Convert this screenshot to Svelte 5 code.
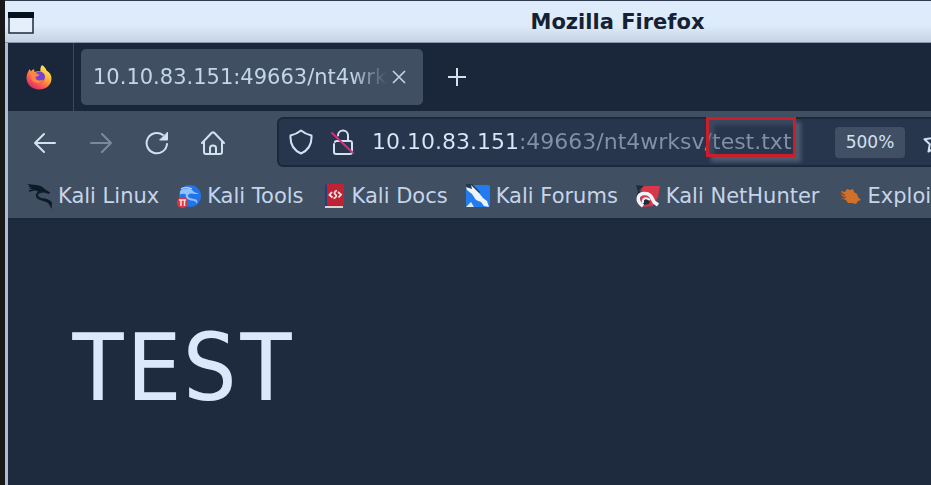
<script>
  const bookmarks = [
    { name: 'Kali Linux', icon: 'linux' },
    { name: 'Kali Tools', icon: 'tools' },
    { name: 'Kali Docs', icon: 'docs' },
    { name: 'Kali Forums', icon: 'forums' },
    { name: 'Kali NetHunter', icon: 'nethunter' },
    { name: 'Exploit', icon: 'exploit' }
  ];
  let url = $state('10.10.83.151:49663/nt4wrksv/test.txt');
</script>

<div class="desktop">
  <div class="window">
    <header class="titlebar">
      <svg class="winicon" viewBox="0 0 26 22" width="26" height="22" aria-hidden="true">
        <rect x="1" y="1" width="24" height="20" fill="#e4effb" stroke="#1c2a3a" stroke-width="1.5" />
        <rect x="0" y="0" width="26" height="6" fill="#04101e" />
      </svg>
      <h1>Mozilla Firefox</h1>
    </header>

    <div class="tabs">
      <button class="view" aria-label="Firefox View">
        <svg viewBox="0 0 26 26" width="26" height="26">
          <defs>
            <linearGradient id="flame" x1="0.85" y1="0.1" x2="0.25" y2="0.95">
              <stop offset="0" stop-color="#fff04f" />
              <stop offset="0.35" stop-color="#ffb43c" />
              <stop offset="0.65" stop-color="#ff6a48" />
              <stop offset="1" stop-color="#e02a68" />
            </linearGradient>
          </defs>
          <path fill="url(#flame)" d="M16 1c3 2 4 4 4.500 5.500C23.500 8 25.500 11 25.500 14.500 25.500 21 20 25.500 13 25.500S.5 20.500.5 14C.5 10.500 2 8 3.500 5l1.500 2.500C6 6 7 5.500 8 5l.5 3c2-1 4-1 6-.5C14 5 14.500 3 16 1z" />
          <circle cx="13.500" cy="13" r="5.500" fill="#7542d8" />
          <path fill="#ff8540" d="M4.500 8.500c3-1.500 5-.5 6 1l3 1.200c-1 2-3.500 1.300-4 2.800.5 3 4 4 8 2-1.500 4.500-9.500 4.500-12 0-1-2.500-.5-5-1-7z" />
        </svg>
      </button>
      <div class="tab">
        <span class="label">10.10.83.151:49663/nt4wrks</span>
        <button class="close" aria-label="Close tab">
          <svg viewBox="0 0 14 14" width="14" height="14"><path d="M1 1l12 12M13 1L1 13" stroke="#c5d5e9" stroke-width="1.600" /></svg>
        </button>
      </div>
      <button class="new" aria-label="New tab">
        <svg viewBox="0 0 20 20" width="20" height="20"><path d="M10 1v18M1 10h18" stroke="#d2e0f2" stroke-width="2" /></svg>
      </button>
    </div>

    <nav class="toolbar">
      <div class="buttons">
        <button aria-label="Back">
          <svg viewBox="0 0 24 24" width="24" height="24"><path d="M22 12H2M11 3l-9 9 9 9" /></svg>
        </button>
        <button aria-label="Forward" class="off" disabled>
          <svg viewBox="0 0 24 24" width="24" height="24"><path d="M2 12h20M13 3l9 9-9 9" /></svg>
        </button>
        <button aria-label="Reload">
          <svg viewBox="0 0 24 24" width="24" height="24"><path d="M22 13a10.200 10.200 0 1 1-4-9" /><path d="M22.500 1.500v7.500H15z" fill="#d2e0f2" stroke-width="1" /></svg>
        </button>
        <button aria-label="Home">
          <svg viewBox="0 0 24 24" width="24" height="24"><path d="M1 12L10.500 2q1.500-1.200 3 0L23 12M3 10.500V21q0 2 2 2h14q2 0 2-2V10.500M9 23v-6q0-2.500 3-2.500t3 2.500v6" /></svg>
        </button>
      </div>

      <div class="urlbar">
        <svg viewBox="0 0 24 26" width="24" height="26"><path d="M12 1.500c3 2.500 6 4 10.500 5C23 15 20 21 12 24.500 4 21 1 15 1.500 6.500 6 5.500 9 4 12 1.500z" /></svg>
        <svg viewBox="0 0 24 26" width="24" height="26">
          <path d="M7 6.500a5 5 0 0 1 10 0V12M4 13q0-1 2-1h13q2 0 2 2v9q0 2-2 2H5q-2 0-2-2v-8" />
          <path d="M1 4l21 20" style:stroke="#d4307c" />
        </svg>
        <div class="address">
          <input aria-label="Address" spellcheck="false" bind:value={url} />
          <span class="marker"></span>
        </div>
        <button class="zoom">500%</button>
        <button class="star" aria-label="Bookmark this page">
          <svg viewBox="0 0 24 24" width="24" height="24"><path d="M12 1.500l3.200 6.700 7.300 1-5.300 5 1.300 7.300L12 18l-6.500 3.500 1.300-7.300-5.300-5 7.300-1z" /></svg>
        </button>
      </div>
    </nav>

    <div class="bookmarks">
      {#each bookmarks as b}
        <a href="#{b.icon}">
          <svg viewBox="0 0 26 26" width="26" height="26" aria-hidden="true">
            {#if b.icon === 'linux'}
              <path fill="#0d1a2a" d="M0 1l9 1c4 .5 7 1.500 8 3.500l6 4-1 1.500-5-1.500c-4 0-6 1-6 2.500s2 3 6 3.500c4 .5 7 2 8 4.500l-.5 6-2-4c-2-3.500-5-3.500-8-4.500-4-1-6-3-5.500-6 .3-1 1-2 2-3L8 7 1 5l5 0z" />
              <path fill="none" stroke="#0d1a2a" stroke-width="1.500" d="M2 3l9 4M2 8l8-2M17 16l7 4" />
            {:else if b.icon === 'tools'}
              <circle cx="14" cy="13" r="11" fill="#2374e8" />
              <path fill="#8fc1fb" d="M4 8c5-4 11-3 14 1l5 2-5 0c-4-1-6 0-6 2s3 2 6 3c3 .5 4 2 3 5-1-3-3-3-6-3.500-4-1-6-3-5-6-2-1-4-1-6 0z" />
              <path fill="none" stroke="#a9d0fc" stroke-width="1.500" d="M5 6c5-3 8-1 11 0" />
              <rect x="1" y="14" width="11" height="11" rx="5" fill="#dd3540" />
              <path d="M3 17h7M5 17v6M8.500 17v6" stroke="#ffe2e2" stroke-width="1.500" />
            {:else if b.icon === 'docs'}
              <path fill="#243c80" d="M4 2l3-1v22l-3 1z" />
              <rect x="6" y="1" width="17" height="21" fill="#bf2232" />
              <path fill="#d9d3d3" d="M4 23h18v2H4z" />
              <path fill="none" stroke="#f5e4e6" stroke-width="1.800" d="M11 9l-2.500 3 3 2.500M17 9l3 2.500-2.500 3M16 7.500c-3 1-3 3-1.500 4s1 3-2 4" />
            {:else if b.icon === 'forums'}
              <rect x="1" y="2" width="24" height="22" rx="2" fill="#237bf0" />
              <path fill="#24384f" d="M1 1h6l8 8-4 5L1 5z" />
              <path fill="#eef3fa" d="M1 4l6 2-1-4 8 8 4 5 4 3 2 6-5-1-3-4-5-2-4-6-5-4z" />
              <path fill="#dce7f4" d="M1 24l5-5 3 5z" />
            {:else if b.icon === 'nethunter'}
              <path fill="#d83649" d="M7 3h18l-2 11-5 9-10 1-3-7z" />
              <path fill="#202b3c" d="M1 2l8 1-5 4 2 3-5 4 2-5z" />
              <path fill="#202b3c" d="M8 17c2-3 5-3 7 1l-1 3-5 1z" />
              <path fill="none" stroke="#f1f4fa" stroke-width="3.500" d="M8 23C1 18 2 11 9 10.500c7-.5 8 5 10 8.500l4 3" />
              <path fill="none" stroke="#f1f4fa" stroke-width="2" d="M8 20c-1-5 3-6 7-3" />
            {:else}
              <path fill="#d0702b" d="M4 8l4 1 2-3 3 1 3-1 1 3 3 2 1 3 3 3-3 1-2 3-4-1-4 0-2-3-3-1 1-2-3-2 2-1z" />
              <path d="M3 10l5 2M4 16l5-2" stroke="#8f4e2a" stroke-width="1.500" />
            {/if}
          </svg>
          <span>{b.name}</span>
        </a>
      {/each}
    </div>

    <main><pre>TEST</pre></main>
  </div>
</div>

<style>
  :global(body) {
    background: #1e2a3d;
  }
  .desktop {
    min-height: 100vh;
    display: flex;
    box-sizing: border-box;
    padding-left: 5px;
    overflow: hidden;
    background: #1a1a1a;
    font: 21px/24px "DejaVu Sans", sans-serif;
    color: #c5d5e9;
  }
  .window {
    flex: 1;
    min-width: 0;
    display: flex;
    flex-direction: column;
    border-left: 3px solid #adbed4;
    background: #1e2a3d;
  }
  button {
    padding: 0;
    border: 0;
    background: none;
    font: inherit;
    color: inherit;
    display: flex;
    align-items: center;
    justify-content: center;
  }
  svg {
    flex: none;
    display: block;
  }
  .titlebar {
    display: flex;
    align-items: center;
    height: 41px;
    margin-left: -3px;
    border-top: 1px solid #2f3c50;
    border-bottom: 1px solid #8796aa;
    padding-left: 3px;
    background: linear-gradient(#deebfa 60%, #c5d2e4);
  }
  .winicon {
    margin-top: 2px;
  }
  h1 {
    flex: 1;
    margin: 0;
    padding-left: 270px;
    text-align: center;
    font-size: 21px;
    line-height: 24px;
    color: #142234;
  }
  .tabs {
    display: flex;
    align-items: center;
    height: 68px;
    background: #1a273a;
  }
  .view {
    width: 66px;
    align-self: stretch;
    border-right: 1px solid #3b495c;
    padding-right: 3px;
  }
  .tab {
    display: flex;
    align-items: center;
    box-sizing: border-box;
    width: 342px;
    height: 56px;
    margin-left: 7px;
    padding: 0 12px;
    border-radius: 5px;
    background: #414f62;
  }
  .label {
    flex: 1;
    min-width: 0;
    overflow: hidden;
    white-space: nowrap;
    mask-image: linear-gradient(90deg, #000 88%, transparent);
  }
  .close {
    width: 24px;
    height: 24px;
  }
  .new {
    width: 40px;
    height: 40px;
    margin-left: 14px;
  }
  .toolbar {
    display: flex;
    align-items: center;
    height: 62px;
    background: #414f62;
  }
  .toolbar svg {
    fill: none;
    stroke: #d2e0f2;
    stroke-width: 2;
    stroke-linejoin: round;
    stroke-linecap: round;
  }
  .buttons {
    display: flex;
    gap: 32px;
    padding: 2px 52px 0 25px;
  }
  .off {
    opacity: 0.4;
  }
  .urlbar {
    flex: 1;
    min-width: 0;
    display: flex;
    align-items: center;
    box-sizing: border-box;
    height: 50px;
    margin-right: -26px;
    padding: 0 8px 0 10px;
    gap: 18px;
    border: 2px solid #1b293c;
    border-radius: 6px;
    background: #27364d;
  }
  .address {
    position: relative;
    flex: 1;
    min-width: 0;
    margin-left: -1px;
  }
  input {
    display: block;
    width: 100%;
    height: 32px;
    padding: 0;
    border: 0;
    outline: 0;
    font: 22px/32px "DejaVu Sans", sans-serif;
    color: transparent;
    background: linear-gradient(90deg, #dbe7f7 147px, #8291a7 147px);
    background-clip: text;
  }
  .marker {
    position: absolute;
    left: 334px;
    top: -9px;
    width: 84px;
    height: 34px;
    border: 3px solid #cb1e2a;
    box-shadow: 5px 5px 4px #4c5b70, inset 5px 5px 4px #4c5b7088;
    pointer-events: none;
  }
  .zoom {
    width: 70px;
    height: 31px;
    border-radius: 4px;
    background: #414f65;
    font-size: 17px;
    color: #d2e0f2;
  }
  .bookmarks {
    display: flex;
    align-items: center;
    height: 45px;
    padding-left: 19px;
    gap: 17px;
    overflow: hidden;
    background: #414f62;
    border-bottom: 2px solid #1a2639;
  }
  a {
    display: flex;
    flex: none;
    align-items: center;
    gap: 5px;
    color: inherit;
    text-decoration: none;
    white-space: nowrap;
  }
  main {
    flex: 1;
    padding: 94px 62px 0;
  }
  pre {
    margin: 0;
    font: 93px/108px "DejaVu Sans Mono", monospace;
    color: #dbe7fa;
  }
</style>
